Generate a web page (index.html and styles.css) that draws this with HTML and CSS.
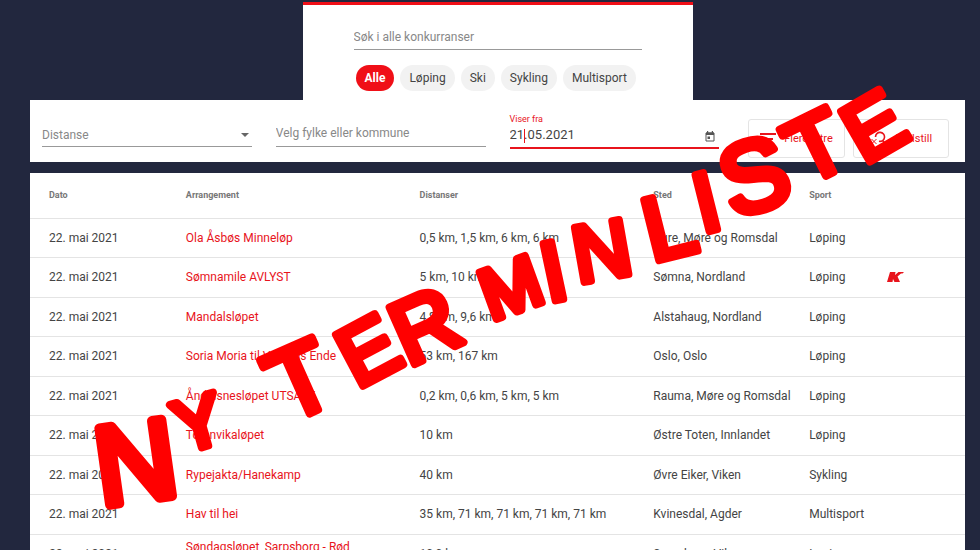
FILE: index.html
```html
<!DOCTYPE html>
<html lang="no">
<head>
    <meta charset="UTF-8">
    <meta name="viewport" content="width=device-width, initial-scale=1.0">
    <title>Terminliste</title>
    <link rel="stylesheet" href="styles.css">
</head>
<body>
    <main class="page">
        <!-- Search -->
        <section class="search">
            <input class="search-input" type="text" placeholder="Søk i alle konkurranser" aria-label="Søk i alle konkurranser">
            <div class="chips">
                <button class="chip active" type="button">Alle</button>
                <button class="chip" type="button">Løping</button>
                <button class="chip" type="button">Ski</button>
                <button class="chip" type="button">Sykling</button>
                <button class="chip" type="button">Multisport</button>
            </div>
        </section>

        <!-- Filters -->
        <section class="filters">
            <div class="filter">
                <select class="field distance" aria-label="Distanse">
                    <option>Distanse</option>
                </select>
                <svg class="arrow" viewBox="0 0 8 4"><path d="M0 0h8L4 4z"/></svg>
            </div>
            <div class="filter">
                <input class="field place" type="text" placeholder="Velg fylke eller kommune" aria-label="Velg fylke eller kommune">
            </div>
            <div class="filter date-filter">
                <label for="from-date">Viser fra</label>
                <input class="field date" id="from-date" type="text" value="21.05.2021">
                <span class="caret"></span>
                <svg class="calendar" viewBox="0 0 10 11">
                    <path d="M1 2h8v8H1z" fill="none" stroke="#555" stroke-width="1"/>
                    <path d="M1 1.5h8V4H1zM2 0h1.2v2H2zM6.800 0H8v2H6.800zM2.500 5.500h2.500V8H2.500z" fill="#555"/>
                </svg>
            </div>
            <div class="filter-buttons">
                <button class="outlined" type="button">
                    <svg width="16" height="12" viewBox="0 0 16 12"><path d="M0 1h16M3 6h10M6 11h4" stroke="#e8141c" stroke-width="2"/></svg>
                    Flere filtre
                </button>
                <button class="outlined" type="button">
                    <svg width="18" height="16" viewBox="0 0 18 16" fill="none" stroke="#e8141c">
                        <path d="M5.500 6A4.500 4.500 0 1 1 9 10.300M12.500 9.500l5 5.500" stroke-width="1.600"/>
                        <path d="M1.500 8l5 5M6.500 8l-5 5"/>
                    </svg>
                    Nullstill
                </button>
            </div>
        </section>

        <!-- Competitions -->
        <table class="races">
            <colgroup>
                <col class="col-2"><col class="col-3"><col class="col-3"><col class="col-2"><col class="col-1"><col class="col-1">
            </colgroup>
            <thead>
                <tr><th>Dato</th><th>Arrangement</th><th>Distanser</th><th>Sted</th><th>Sport</th><th></th></tr>
            </thead>
            <tbody>
                <tr><td>22. mai 2021</td><td><a href="#">Ola Åsbøs Minneløp</a></td><td>0,5 km, 1,5 km, 6 km, 6 km</td><td>Aure, Møre og Romsdal</td><td>Løping</td><td></td></tr>
                <tr>
                    <td>22. mai 2021</td><td><a href="#">Sømnamile AVLYST</a></td><td>5 km, 10 km</td><td>Sømna, Nordland</td><td>Løping</td>
                    <td><svg class="badge" width="17" height="10" viewBox="0 0 17 10"><path d="M3 0h5.500L8 3 11.500 0H17l-1.500 1.500H14L10.500 4.500 13 10H7.500L6 7 5.500 10H0z"/></svg></td>
                </tr>
                <tr><td>22. mai 2021</td><td><a href="#">Mandalsløpet</a></td><td>4,8 km, 9,6 km</td><td>Alstahaug, Nordland</td><td>Løping</td><td></td></tr>
                <tr><td>22. mai 2021</td><td><a href="#">Soria Moria til Verdens Ende</a></td><td>53 km, 167 km</td><td>Oslo, Oslo</td><td>Løping</td><td></td></tr>
                <tr><td>22. mai 2021</td><td><a href="#">Åndalsnesløpet UTSATT</a></td><td>0,2 km, 0,6 km, 5 km, 5 km</td><td>Rauma, Møre og Romsdal</td><td>Løping</td><td></td></tr>
                <tr><td>22. mai 2021</td><td><a href="#">Totenvikaløpet</a></td><td>10 km</td><td>Østre Toten, Innlandet</td><td>Løping</td><td></td></tr>
                <tr><td>22. mai 2021</td><td><a href="#">Rypejakta/Hanekamp</a></td><td>40 km</td><td>Øvre Eiker, Viken</td><td>Sykling</td><td></td></tr>
                <tr><td>22. mai 2021</td><td><a href="#">Hav til hei</a></td><td>35 km, 71 km, 71 km, 71 km, 71 km</td><td>Kvinesdal, Agder</td><td>Multisport</td><td></td></tr>
                <tr><td>22. mai 2021</td><td><a href="#">Søndagsløpet, Sarpsborg - Rød<br>Herregård</a></td><td>10,0 km</td><td>Sarpsborg, Viken</td><td>Løping</td><td></td></tr>
            </tbody>
        </table>
    </main>

    <!-- Banner text across the page, one position and angle per letter -->
    <svg class="banner" viewBox="0 0 980 550">
        <text x="101 182 230 286 357 408 491 548 578 652 702 733 805 864"
              y="506 453 430 424 389 367 321 302 283 262 233 219 186 165"
              rotate="-8 -16 0 -24 -28 -24 -20 -12 -10 -14 -14 -18 -26 -30"><tspan class="first">N</tspan><tspan class="small">Y</tspan> <tspan class="big">T</tspan>E<tspan class="wide">R</tspan><tspan class="small">M</tspan>I<tspan class="slim">N</tspan><tspan class="wide">L</tspan>I<tspan class="big">S</tspan><tspan class="wide">T</tspan>E</text>
    </svg>
</body>
</html>
```

FILE: styles.css
```css
* {
    box-sizing: border-box;
}

body {
    margin: 0;
    height: 100vh;
    overflow: hidden;
    position: relative;
    background-color: #22273e;
    font-family: Roboto, "Liberation Sans", sans-serif;
    font-size: 12px;
    color: #444;
}

button,
input,
select {
    font-family: inherit;
    font-size: inherit;
    color: inherit;
    margin: 0;
}

.page {
    margin: 2px 15px 0 30px;
}

/* Search */
.search {
    width: 390px;
    margin: 0 auto;
    padding: 20px 51px 9px;
    border-top: 3px solid #f00f17;
    background-color: #fff;
}

.search-input {
    display: block;
    width: 100%;
    height: 25px;
    padding: 0;
    border: 0;
    border-bottom: 1px solid #999;
    background: none;
}

::placeholder {
    color: #888;
    opacity: 1;
}

.chips {
    display: flex;
    gap: 6px;
    padding: 15px 2px 0;
}

.chip {
    height: 26px;
    padding: 0 9px;
    border: 0;
    border-radius: 13px;
    background-color: #f2f2f2;
    white-space: nowrap;
}

.chip.active {
    background-color: #f00f17;
    color: #fff;
    font-weight: bold;
}

/* Filters */
.filters {
    display: grid;
    grid-template-columns: repeat(4, 1fr);
    align-items: end;
    height: 62px;
    margin-bottom: 11px;
    background-color: #fff;
}

.filter {
    position: relative;
    padding: 0 12px 15px;
}

.field {
    display: block;
    width: 100%;
    height: 24px;
    padding: 0;
    border: 0;
    border-bottom: 1px solid #999;
    border-radius: 0;
    background: none;
    appearance: none;
}

.distance,
.place {
    color: #888;
}

.place {
    height: 28px;
}

.arrow {
    position: absolute;
    right: 15px;
    bottom: 25px;
    width: 8px;
    height: 4px;
    fill: #666;
}

.date-filter {
    padding-bottom: 13px;
}

.date-filter label {
    display: block;
    font-size: 9px;
    line-height: 10px;
    color: #e8141c;
}

.date {
    height: 25px;
    padding-bottom: 2px;
    border-bottom: 2px solid #e8141c;
    font-size: 13px;
}

.caret {
    position: absolute;
    left: 26px;
    bottom: 19px;
    width: 1px;
    height: 14px;
    background-color: #e8141c;
}

.calendar {
    position: absolute;
    right: 16px;
    bottom: 20px;
    width: 10px;
    height: 11px;
}

.filter-buttons {
    display: flex;
    gap: 8px;
    padding: 0 16px 4px 17px;
}

.outlined {
    display: flex;
    flex: 1;
    align-items: center;
    justify-content: center;
    gap: 8px;
    height: 39px;
    padding: 0;
    border: 1px solid #e4e4e4;
    border-radius: 3px;
    background: none;
    font-size: 11px;
    color: #e8141c;
    white-space: nowrap;
}

/* Competitions */
.races {
    width: 100%;
    table-layout: fixed;
    border-collapse: collapse;
    background-color: #fff;
}

.col-1 {
    width: 8.333%;
}

.col-2 {
    width: 16.667%;
}

.col-3 {
    width: 25%;
}

.races th,
.races td {
    height: 39px;
    padding: 0;
    border-bottom: 1px solid #e4e4e4;
    text-align: left;
    white-space: nowrap;
}

.races th {
    height: 45px;
    font-size: 9px;
    color: #777;
}

.races tr:nth-child(even) td {
    height: 40px;
}

.races th:first-child,
.races td:first-child {
    padding-left: 19px;
}

.races a {
    color: #e8141c;
    text-decoration: none;
}

.races tr:last-child td {
    padding: 5px 0;
}

.races tr:last-child td:first-child {
    padding-left: 19px;
}

.badge {
    display: block;
    fill: #e8141c;
}

/* Banner */
.banner {
    position: absolute;
    top: 0;
    left: 0;
    width: 100%;
    pointer-events: none;
}

.banner text {
    font-family: "Liberation Sans", sans-serif;
    font-size: 84px;
    fill: #f00;
    stroke: #f00;
    stroke-width: 8px;
    stroke-linejoin: round;
}

.banner .first {
    font-size: 112px;
    stroke-width: 10px;
}

.banner .small {
    font-size: 72px;
}

.banner .slim {
    font-size: 80px;
}

.banner .wide {
    font-size: 90px;
}

.banner .big {
    font-size: 100px;
}
```
